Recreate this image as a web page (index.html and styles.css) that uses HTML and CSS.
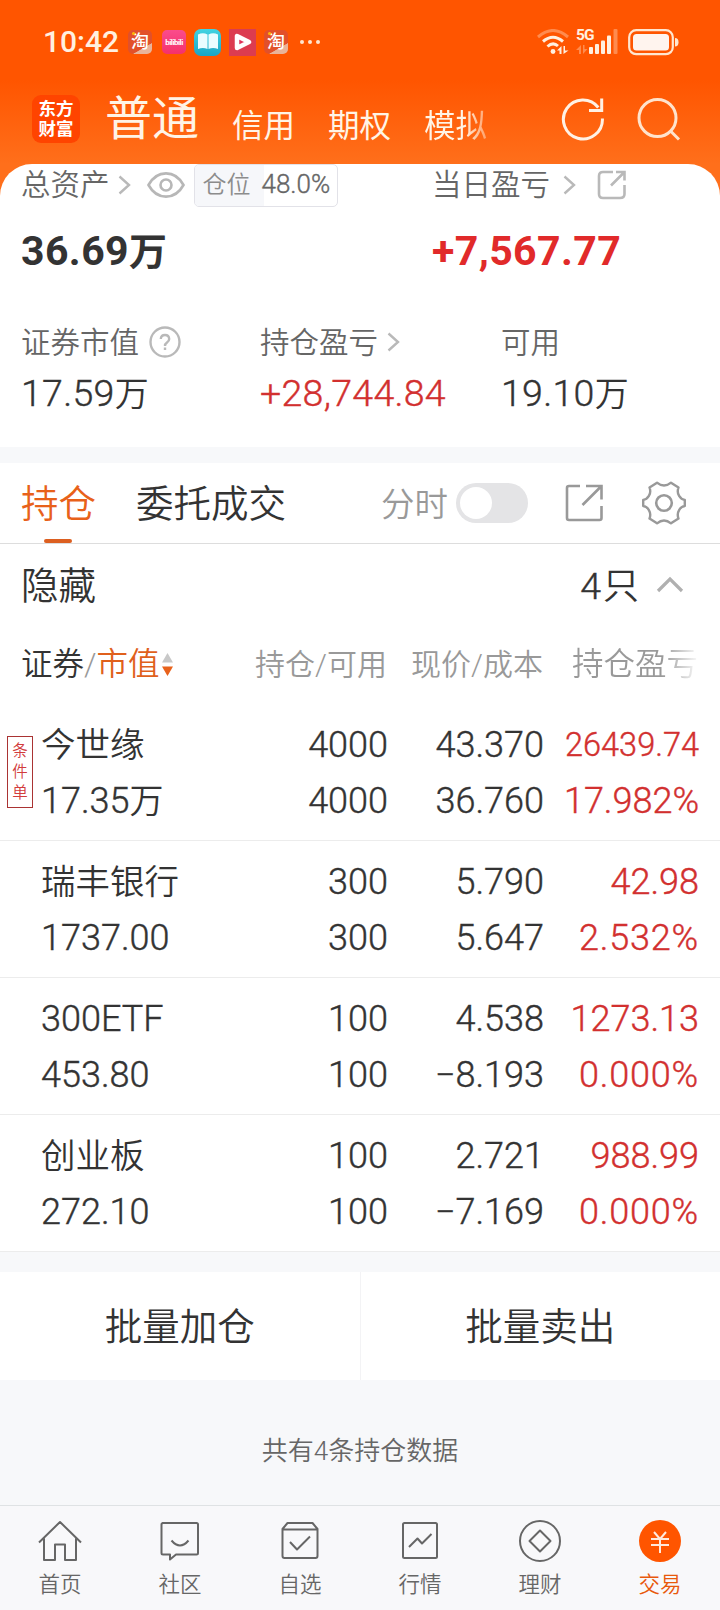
FILE: index.html
```
<!DOCTYPE html>
<html lang="zh-CN">
<head>
    <meta charset="UTF-8">
    <meta name="viewport" content="width=device-width, initial-scale=1.0">
    <title>交易</title>
    <link rel="stylesheet" href="styles.css">
</head>
<body>
    <header class="top">
        <div class="status">
            <span class="time">10:42</span>
            <span class="app taobao"><i></i>淘</span>
            <span class="app bili">bilibili</span>
            <span class="app book">
                <svg width="20" height="18" viewBox="0 0 20 18"><path fill="#eafcff" d="M0 1.500Q5-1 9.500 1.500V16Q5 14 0 16ZM10.500 1.500Q15-1 20 1.500V16Q15 14 10.500 16Z"/></svg>
            </span>
            <span class="app video">
                <svg width="18" height="18" viewBox="0 0 18 18"><path d="M3 3V15L15 9Z" fill="#e0345c" stroke="#fff" stroke-width="4.500" stroke-linejoin="round"/></svg>
            </span>
            <span class="app taobao second"><i></i>淘</span>
            <span class="more"><i></i><i></i><i></i></span>
            <svg class="wifi" width="32" height="26" viewBox="0 0 32 26" fill="none" stroke="#fff0e0" stroke-width="3">
                <path d="M1 8Q16-5 31 8" opacity=".35"/>
                <path d="M6 12.500Q16 4 26 12.500"/>
                <path d="M10.500 17.500Q16 12.500 21 17"/>
                <circle cx="16" cy="22.500" r="2.400" fill="#fff0e0" stroke="none"/>
                <path d="M20 21.500L24.500 17V25H22.500V21.500ZM26.500 25V17H28V21.500H31.500Z" fill="#fff0e0" stroke="none"/>
            </svg>
            <span class="signal">
                <b>5G</b>
                <svg width="42" height="26" viewBox="0 0 42 26" fill="#fff0e0">
                    <path d="M0 21L5 16V25H3V21ZM7 25V16H8.500V20H11.500Z" opacity=".35"/>
                    <rect x="13" y="18" width="4" height="7" rx="1"/>
                    <rect x="19" y="15" width="4" height="10" rx="1"/>
                    <rect x="25" y="11.500" width="4" height="13.500" rx="1"/>
                    <rect x="31" y="6.500" width="4" height="18.500" rx="1"/>
                    <rect x="37.500" y="0" width="4" height="25" rx="1" opacity=".35"/>
                </svg>
            </span>
            <svg class="battery" width="51" height="27" viewBox="0 0 51 27">
                <rect x="1.200" y="1.200" width="43.600" height="24" rx="7" fill="none" stroke="#ffe6d0" stroke-width="2.200"/>
                <rect x="5" y="5" width="36" height="16.500" rx="3.500" fill="#fff4ee"/>
                <path d="M47 9Q50.500 9 50.500 13.200T47 17.500Z" fill="#ffe6d0"/>
            </svg>
        </div>
        <nav class="accounts">
            <div class="logo">东方<br>财富</div>
            <a class="acct current">普通</a>
            <a class="acct">信用</a>
            <a class="acct">期权</a>
            <a class="acct faded">模拟</a>
            <svg class="refresh" width="44" height="44" viewBox="0 0 44 44" fill="none" stroke="#fff1e4" stroke-width="3">
                <path d="M41.400 21.500A19.500 19.500 0 1 1 37.300 10.500"/>
                <path d="M40.700 1.500V13.500H28"/>
            </svg>
            <svg class="search" width="44" height="44" viewBox="0 0 44 44" fill="none" stroke="#ffe3cc" stroke-width="3">
                <circle cx="20.500" cy="20" r="18.500"/>
                <path d="M33 32.500L42 41.500"/>
            </svg>
        </nav>
    </header>

    <section class="assets">
        <div class="label-row">
            <div class="left">
                <span>总资产</span>
                <svg class="chev" width="13" height="20" viewBox="0 0 13 20"><path d="M1.500 1.500L11 10L1.500 18.500"/></svg>
                <svg class="eye" width="38" height="26" viewBox="0 0 38 26" fill="none" stroke="#b7b7b7" stroke-width="2.600"><path d="M1.500 13C10-2.500 28-2.500 36.500 13C28 28.500 10 28.500 1.500 13Z"/><circle cx="19" cy="13" r="5.500"/></svg>
                <div class="position"><span>仓位</span><b>48.0%</b></div>
            </div>
            <div class="right">
                <span>当日盈亏</span>
                <svg class="chev" width="13" height="20" viewBox="0 0 13 20"><path d="M1.500 1.500L11 10L1.500 18.500"/></svg>
                <svg class="share-sm" width="30" height="30" viewBox="0 0 30 30" fill="none" stroke="#b9b9b9" stroke-width="2.600"><path d="M16 2H6Q2 2 2 6V24Q2 28 6 28H23Q27.500 28 27.500 24V15M19 2H27.500V10.500M27 2.500L14 15.500"/></svg>
            </div>
        </div>
        <div class="total-row">
            <div class="total">36.69<small>万</small></div>
            <div class="total up">+7,567.77</div>
        </div>
        <div class="stats">
            <div>
                <div class="stat-label"><span>证券市值</span>
                    <svg class="help" width="32" height="32" viewBox="0 0 32 32" fill="none" stroke="#b9b9b9" stroke-width="2.400"><circle cx="16" cy="16" r="14.500"/><path d="M11.800 13Q12 9 16 9T20.200 13Q20.200 15 18 16.500T16 20M16 21.500V24"/></svg>
                </div>
                <div class="stat-value">17.59<small>万</small></div>
            </div>
            <div>
                <div class="stat-label"><span>持仓盈亏</span>
                    <svg class="chev" width="13" height="20" viewBox="0 0 13 20"><path d="M1.500 1.500L11 10L1.500 18.500"/></svg>
                </div>
                <div class="stat-value up">+28,744.84</div>
            </div>
            <div>
                <div class="stat-label"><span>可用</span></div>
                <div class="stat-value">19.10<small>万</small></div>
            </div>
        </div>
    </section>

    <section class="holdings">
        <div class="tabs">
            <a class="tab active">持仓</a>
            <a class="tab">委托成交</a>
            <span class="minute">分时</span>
            <span class="switch"></span>
            <svg class="share" width="38" height="38" viewBox="0 0 38 38" fill="none" stroke="#999" stroke-width="2.600"><path d="M15 2H4Q2 2 2 4V34Q2 36 4 36H34.500Q36.500 36 36.500 34V22M21 2H36.500V15.500M36 2.500L17.500 21"/></svg>
            <svg class="gear" width="44" height="44" viewBox="0 0 44 44" fill="none" stroke="#999" stroke-width="2.400" stroke-linejoin="round"><path d="M42.800 19V25C38.500 25.500 34 31 36.500 37.600L29 42.300Q22 36.500 15 42.300L7.500 37.600C10 31 5.500 25.500 1.200 25V19C5.500 18.500 10 13 7.500 6.400L15 1.700Q22 7.500 29 1.700L36.500 6.400C34 13 38.500 18.500 42.800 19Z"/><circle cx="22" cy="22" r="7.800" stroke-width="2.600"/></svg>
        </div>
        <div class="fold">
            <span>隐藏</span>
            <span class="count">4<small>只</small></span>
            <svg width="28" height="18" viewBox="0 0 28 18" fill="none" stroke="#b0b0b0" stroke-width="3.200"><path d="M2 16L14 4L26 16"/></svg>
        </div>
        <div class="grid thead">
            <div class="sort">证券<i>/</i><em>市值</em>
                <svg width="11" height="24" viewBox="0 0 11 24"><path d="M0 9.500L5.500 0L11 9.500Z" fill="#c8c8c8"/><path d="M0 13.500H11L5.500 23Z" fill="#e8621c"/></svg>
            </div>
            <div>持仓/可用</div>
            <div>现价/成本</div>
            <div class="last">持仓盈亏</div>
        </div>

        <div class="grid row">
            <span class="tag">条件单</span>
            <div class="name">今世缘</div><div>4000</div><div>43.370</div><div class="up long">26439.74</div>
            <div class="value">17.35<small>万</small></div><div>4000</div><div>36.760</div><div class="up">17.982%</div>
        </div>
        <div class="grid row">
            <div class="name">瑞丰银行</div><div>300</div><div>5.790</div><div class="up">42.98</div>
            <div class="value">1737.00</div><div>300</div><div>5.647</div><div class="up pct">2.532%</div>
        </div>
        <div class="grid row">
            <div class="name latin">300ETF</div><div>100</div><div>4.538</div><div class="up">1273.13</div>
            <div class="value">453.80</div><div>100</div><div>−8.193</div><div class="up pct">0.000%</div>
        </div>
        <div class="grid row">
            <div class="name">创业板</div><div>100</div><div>2.721</div><div class="up">988.99</div>
            <div class="value">272.10</div><div>100</div><div>−7.169</div><div class="up pct">0.000%</div>
        </div>
    </section>

    <div class="batch">
        <a>批量加仓</a>
        <a>批量卖出</a>
    </div>
    <p class="summary">共有4条持仓数据</p>

    <nav class="tabbar">
        <a>
            <svg width="44" height="44" viewBox="0 0 44 44"><path d="M1 22.500L22 2L43 22.500M6 18.500V40H17V24.500H27V40H38V18.500"/></svg>
            首页
        </a>
        <a>
            <svg width="44" height="44" viewBox="0 0 44 44"><path d="M4.500 3H38.500Q40 3 40 4.500V33Q40 34.500 38.500 34.500H18L12 39.500V34.500H5Q3.500 34.500 3.500 33V4.500Q3.500 3 5 3Z"/><path d="M13.500 20.500Q22 30.500 30.500 20.500"/></svg>
            社区
        </a>
        <a>
            <svg width="44" height="44" viewBox="0 0 44 44"><path d="M4.500 9L9.500 3H34.500L39.500 9V36Q39.500 38 37.500 38H6.500Q4.500 38 4.500 36ZM4.500 9.500H39.500M12 22L19 29.500L32 16.500"/></svg>
            自选
        </a>
        <a>
            <svg width="44" height="44" viewBox="0 0 44 44"><rect x="5" y="3" width="34" height="35" rx="1.500"/><path d="M11 27L19.500 18.500L24 23.500L33.500 14"/></svg>
            行情
        </a>
        <a>
            <svg width="44" height="44" viewBox="0 0 44 44"><circle cx="22" cy="21" r="20"/><path d="M22 10.500L32.500 21L22 31.500L11.500 21Z"/></svg>
            理财
        </a>
        <a class="active">
            <svg width="44" height="44" viewBox="0 0 44 44"><circle cx="22" cy="21" r="21"/><path d="M16 12L22 19L28 12M13 19H31M13 25H31M22 19V33"/></svg>
            交易
        </a>
    </nav>
</body>
</html>
```
FILE: styles.css
```
* {
    box-sizing: border-box;
}

body {
    margin: 0;
    width: 720px;
    background: #f7f8fa;
    color: #333;
    font-family: Roboto, 'Noto Sans CJK SC', sans-serif;
    font-weight: 350;
}

svg {
    display: block;
    flex: none;
}

i, em {
    font-style: normal;
}

/* Header */
.top {
    height: 200px;
    background: linear-gradient(#ff5500 0, #ff5500 80px, #ff6f1b 164px);
}

.status {
    display: flex;
    align-items: center;
    height: 84px;
    padding-left: 43px;
    color: #fff0e0;
}

.time {
    width: 85px;
    font-size: 30px;
    font-weight: 500;
    line-height: 36px;
}

.app {
    display: flex;
    align-items: center;
    justify-content: center;
    flex: none;
    width: 24px;
    height: 24px;
    margin-right: 10px;
    border-radius: 5px;
    color: #fff;
    overflow: hidden;
}

.taobao {
    position: relative;
    background: linear-gradient(150deg, #e2502a 70%, #e9b49a 72%);
    font-size: 18px;
    line-height: 24px;
    font-weight: 500;
}

.taobao i {
    position: absolute;
    left: 4px;
    top: 2px;
    width: 3px;
    height: 3px;
    border-radius: 50%;
    background: #ffb400;
}

.bili {
    background: linear-gradient(#fa4c8c, #f5306c);
    font-size: 8px;
    font-weight: 700;
    letter-spacing: -0.5px;
}

.book {
    width: 27px;
    height: 27px;
    margin: 0 8px 0 -2px;
    border-radius: 7px;
    background: linear-gradient(#42d3e2, #1aa5c4);
}

.video {
    width: 27px;
    height: 27px;
    margin-right: 8px;
    border-radius: 0;
    background: #dc3c50;
}

.more {
    display: flex;
    gap: 4px;
    margin-left: 2px;
}

.more i {
    width: 4px;
    height: 4px;
    border-radius: 50%;
    background: #ffe6d0;
}

.wifi {
    margin-left: auto;
}

.signal {
    position: relative;
    margin: 0 10px 0 7px;
}

.signal b {
    position: absolute;
    left: 0;
    top: 0;
    font-size: 15.5px;
    line-height: 12px;
    letter-spacing: -0.8px;
}

.battery {
    margin-right: 41px;
}

.accounts {
    display: flex;
    align-items: flex-start;
    height: 80px;
    padding-left: 32px;
    color: #fff4e6;
    font-weight: 400;
}

.logo {
    flex: none;
    width: 48px;
    height: 48px;
    margin: 11px 25px 0 0;
    padding: 4px 0 0;
    border-radius: 9px;
    background: #ff4400;
    color: #fff;
    font-size: 17.5px;
    font-weight: 700;
    line-height: 20px;
    text-align: center;
}

.acct {
    flex: none;
    width: 96px;
    margin-top: 23px;
    font-size: 31.5px;
    line-height: 40px;
}

.acct.current {
    width: 127px;
    margin-top: 5px;
    font-size: 47px;
    line-height: 60px;
}

.acct.faded {
    background: linear-gradient(90deg, #fff4e6 40px, #ff9a60 64px);
    -webkit-background-clip: text;
    background-clip: text;
    color: transparent;
}

.refresh {
    margin: 13px 32px 0 41px;
}

.refresh,
.search {
    flex: none;
}

.search {
    margin-top: 14px;
}

.up {
    color: #d2302f;
}

.chev {
    fill: none;
    stroke: #b9b9b9;
    stroke-width: 2.4;
}

/* Asset summary */
.assets {
    height: 283px;
    margin-top: -36px;
    background: #fff;
    border-radius: 32px 32px 0 0;
}

.label-row {
    display: flex;
    height: 43px;
    color: #666;
    font-size: 29.5px;
    line-height: 40px;
}

.label-row .left,
.label-row .right {
    display: flex;
    align-items: center;
    height: 42px;
}

.label-row .left {
    width: 432px;
    padding-left: 21px;
}

.label-row .left .chev {
    margin: 0 16px 0 8px;
}

.label-row .right .chev {
    margin: 0 21px 0 13px;
}

.position {
    display: flex;
    flex: none;
    width: 144px;
    height: 43px;
    margin-left: 9px;
    border: 1px solid #e2e2e8;
    border-radius: 5px;
    overflow: hidden;
    line-height: 40px;
}

.position span {
    width: 69px;
    padding-left: 8px;
    background: #f6f7fa;
    color: #8c8c8c;
    font-size: 24px;
}

.position b {
    margin-left: -2px;
    font-size: 26px;
    line-height: 39px;
    font-weight: 350;
}

.total-row {
    display: grid;
    grid-template-columns: 411px 1fr;
    height: 87px;
    padding-left: 21px;
}

.total {
    font-size: 41px;
    font-weight: 700;
    line-height: 89px;
    letter-spacing: 0.4px;
}

.total small {
    font-size: 38px;
}

.total.up {
    color: #e12a2a;
}

.stats {
    display: grid;
    grid-template-columns: 239px 241px 1fr;
    padding: 22px 0 0 21px;
}

.stat-label {
    display: flex;
    align-items: center;
    height: 52px;
    color: #666;
    font-size: 29.5px;
}

.stat-label span {
    padding-bottom: 4px;
}

.stat-label .help {
    margin-left: 10px;
}

.stat-label .chev {
    margin-left: 9px;
}

.stat-value {
    font-size: 37.5px;
    line-height: 51px;
    letter-spacing: 0.3px;
}

.stat-value small {
    font-size: 34px;
}

/* figures sit between Light and Regular */
.stat-value,
.position b,
.count,
.row > div:not(.name),
.name.latin {
    -webkit-text-stroke: 0.4px currentColor;
}

.stat-value small,
.count small,
.value small {
    -webkit-text-stroke: 0;
}

/* Holdings */
.holdings {
    margin-top: 16px;
    background: #fff;
}

.tabs {
    display: flex;
    align-items: center;
    height: 81px;
    border-bottom: 1px solid #ddd;
    font-size: 37.5px;
}

.tab {
    position: relative;
    height: 80px;
    margin-left: 21px;
    line-height: 82px;
}

.tab + .tab {
    margin-left: 40px;
}

.tab.active {
    color: #e8611a;
}

.tab.active::after {
    content: '';
    position: absolute;
    left: 23px;
    bottom: 0;
    width: 28px;
    height: 4px;
    border-radius: 2px;
    background: #dc5f20;
}

.minute {
    margin-left: auto;
    padding-bottom: 4px;
    color: #999;
    font-size: 33.5px;
}

.switch {
    width: 72px;
    height: 40px;
    margin: 0 37px 0 8px;
    padding: 4px;
    border-radius: 20px;
    background: #e4e4e6;
}

.switch::before {
    content: '';
    display: block;
    width: 32px;
    height: 32px;
    border-radius: 50%;
    background: #fff;
}

.gear {
    margin: 0 34px 0 39px;
}

.fold {
    display: flex;
    align-items: center;
    height: 82px;
    padding: 0 36px 0 21px;
    font-size: 37.5px;
}

.fold span {
    padding-bottom: 5px;
}

.fold svg {
    margin-bottom: 2px;
}

.count {
    margin: 0 17px 0 auto;
}

.count small {
    margin-left: 2px;
    font-size: 36px;
}

.grid {
    display: grid;
    text-align: right;
}

.thead {
    grid-template-columns: 210px 156px 156px 155px;
    height: 78px;
    padding-left: 21px;
    color: #999;
    font-size: 30px;
    line-height: 78px;
}

.sort {
    display: flex;
    align-items: center;
    color: #333;
    font-size: 31.5px;
}

.sort i {
    color: #999;
}

.sort em {
    margin-right: 2px;
    color: #e0601c;
}

.last {
    margin-left: 29px;
    font-size: 31.5px;
    text-align: left;
    background: linear-gradient(90deg, #999 90px, #fff 128px);
    -webkit-background-clip: text;
    background-clip: text;
    color: transparent;
}

.row {
    position: relative;
    grid-template-columns: 190px 157px 156px 155px;
    grid-auto-rows: 56px;
    padding: 12px 0 12px 41px;
    border-bottom: 1px solid #ececec;
    font-size: 36px;
    line-height: 58px;
}

.name,
.value {
    text-align: left;
}

.name {
    font-size: 34.5px;
    white-space: nowrap;
}

.name.latin {
    font-size: 36px;
}

.value small {
    font-size: 34px;
}

.long {
    font-size: 32.5px;
}

.pct {
    letter-spacing: 0.8px;
}

.tag {
    position: absolute;
    left: 7px;
    top: 32px;
    width: 26px;
    height: 72px;
    padding: 4px 4px;
    border: 1px solid #a33;
    color: #d23c3c;
    font-size: 15.5px;
    line-height: 21px;
    text-align: center;
    word-break: break-all;
}

/* Footer */
.batch {
    display: flex;
    height: 108px;
    margin-top: 20px;
    background: #fff;
}

.batch a {
    flex: 1;
    font-size: 37.5px;
    line-height: 111px;
    text-align: center;
}

.batch a:first-child {
    border-right: 1px solid #f3f3f5;
}

.summary {
    margin: 0;
    height: 125px;
    color: #666;
    font-size: 26px;
    line-height: 142px;
    text-align: center;
}

.tabbar {
    display: flex;
    height: 105px;
    border-top: 1px solid #dfe2e4;
    background: #f8f8fa;
}

.tabbar a {
    flex: 1;
    padding-top: 14px;
    color: #666;
    font-size: 21.5px;
    line-height: 41px;
    text-align: center;
}

.tabbar svg {
    margin: 0 auto;
    fill: none;
    stroke: #666;
    stroke-width: 2;
    stroke-linejoin: round;
}

.tabbar .active {
    color: #e8590c;
}

.tabbar .active circle {
    fill: #ff5500;
    stroke: none;
}

.tabbar .active path {
    stroke: #ffe9dc;
}
```
